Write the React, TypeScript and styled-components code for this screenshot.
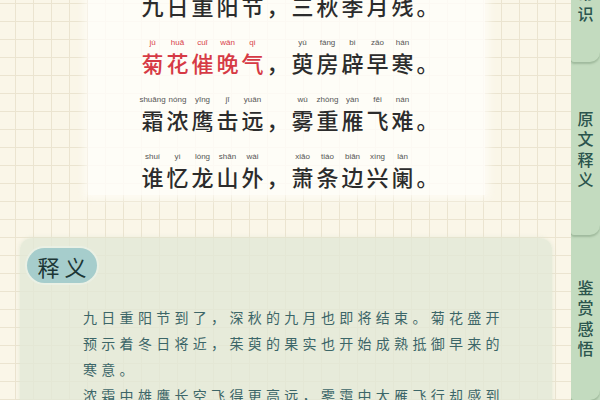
import React from 'react';
import styled, { createGlobalStyle } from 'styled-components';

const GlobalStyle = createGlobalStyle`
  html, body {
    margin: 0;
    padding: 0;
    width: 600px;
    height: 400px;
    overflow: hidden;
  }
  body {
    background-color: #faf6e8;
    background-image:
      linear-gradient(to right, #ebe4d0 1px, transparent 1px),
      linear-gradient(to bottom, #ebe4d0 1px, transparent 1px);
    background-size: 18px 18px;
    background-position: 15px 3px;
    font-family: "Noto Sans CJK SC", "Noto Sans", sans-serif;
  }
`;

const Page = styled.div`
  display: flex;
  width: 600px;
  height: 400px;
  overflow: hidden;
`;

const Main = styled.main`
  flex: 1;
  display: flex;
  flex-direction: column;
  align-items: flex-start;
`;

const PoemCard = styled.section`
  margin: -20px 0 0 88px;
  width: 397px;
  box-sizing: border-box;
  padding: 0 0 5px 52px;
  display: flex;
  flex-direction: column;
  gap: 18px;
  background: rgba(255, 254, 250, 0.82);
  box-shadow: 0 0 8px 4px rgba(255, 254, 250, 0.7);
`;

const PoemRow = styled.div`
  display: flex;
`;

const Cell = styled.div`
  width: 25px;
  display: flex;
  flex-direction: column;
  align-items: center;
`;

const Pinyin = styled.span<{ $red?: boolean }>`
  height: 12px;
  line-height: 12px;
  font-family: "Liberation Sans", Arial, sans-serif;
  font-size: 8px;
  white-space: nowrap;
  color: ${(p) => (p.$red ? '#d8424b' : '#555')};
`;

const Hanzi = styled.span<{ $red?: boolean }>`
  font-size: 22px;
  line-height: 27px;
  font-weight: 500;
  color: ${(p) => (p.$red ? '#d63a45' : '#2c2c2c')};
`;

const NoteCard = styled.section`
  margin: 43px 0 0 20px;
  width: 532px;
  box-sizing: border-box;
  padding: 10px 7px 0;
  border-radius: 12px;
  background: rgba(226, 232, 214, 0.78);
  box-shadow: 0 0 4px rgba(220, 228, 208, 0.8);
  min-height: 200px;
`;

const Pill = styled.div`
  width: 70px;
  height: 35px;
  border-radius: 18px;
  background: #a6cdcc;
  box-shadow: 0 0 0 2px rgba(235, 242, 232, 0.7);
  color: #1c3636;
  font-size: 22px;
  letter-spacing: 5px;
  display: flex;
  align-items: center;
  justify-content: center;
  padding-left: 5px;
  box-sizing: border-box;
`;

const Paragraph = styled.p<{ $first?: boolean }>`
  margin: ${(p) => (p.$first ? '21px' : '0')} 0 0 56px;
  width: 428px;
  font-size: 14px;
  letter-spacing: 4.3px;
  line-height: 26px;
  color: #3c6668;
`;

const TabStrip = styled.nav`
  width: 29px;
  height: 400px;
  overflow: hidden;
  display: flex;
  flex-direction: column;
  background: #c3dbbf;
  box-shadow: inset 1px 0 1px rgba(90, 120, 90, 0.15);
`;

const Tab = styled.div<{ $height: number; $z: number; $bottom?: number }>`
  position: relative;
  z-index: ${(p) => p.$z};
  flex: 0 0 ${(p) => p.$height}px;
  min-height: 0;
  display: flex;
  flex-direction: column;
  align-items: center;
  justify-content: ${(p) => (p.$bottom !== undefined ? 'flex-end' : 'center')};
  padding-bottom: ${(p) => p.$bottom ?? 0}px;
  box-sizing: border-box;
  background: #c3dbbf;
  border-bottom-right-radius: 10px;
  border-bottom-left-radius: 3px;
  box-shadow: 0 2px 2px rgba(70, 100, 70, 0.28);
`;

const TabChar = styled.span`
  font-size: 16px;
  line-height: 20.5px;
  height: 20.5px;
  flex-shrink: 0;
  font-weight: 500;
  color: #2a544d;
`;

type Syl = [string, string];

const poem: { red?: boolean; chars: Syl[] }[] = [
  {
    chars: [
      ['九', 'jiǔ'], ['日', 'rì'], ['重', 'chóng'], ['阳', 'yáng'], ['节', 'jié'], ['，', ''],
      ['三', 'sān'], ['秋', 'qiū'], ['季', 'jì'], ['月', 'yuè'], ['残', 'cán'], ['。', ''],
    ],
  },
  {
    red: true,
    chars: [
      ['菊', 'jú'], ['花', 'huā'], ['催', 'cuī'], ['晚', 'wǎn'], ['气', 'qì'], ['，', ''],
      ['萸', 'yú'], ['房', 'fáng'], ['辟', 'bì'], ['早', 'zǎo'], ['寒', 'hán'], ['。', ''],
    ],
  },
  {
    chars: [
      ['霜', 'shuāng'], ['浓', 'nóng'], ['鹰', 'yīng'], ['击', 'jī'], ['远', 'yuǎn'], ['，', ''],
      ['雾', 'wù'], ['重', 'zhòng'], ['雁', 'yàn'], ['飞', 'fēi'], ['难', 'nán'], ['。', ''],
    ],
  },
  {
    chars: [
      ['谁', 'shuí'], ['忆', 'yì'], ['龙', 'lóng'], ['山', 'shān'], ['外', 'wài'], ['，', ''],
      ['萧', 'xiāo'], ['条', 'tiáo'], ['边', 'biān'], ['兴', 'xìng'], ['阑', 'lán'], ['。', ''],
    ],
  },
];

const tabs = [
  { label: '文学常识', height: 62, bottom: 39 },
  { label: '原文释义', height: 173 },
  { label: '鉴赏感悟', height: 165 },
];

const App: React.FC = () => {
  return (
    <>
      <GlobalStyle />
      <Page>
        <Main>
          <PoemCard>
            {poem.map((line, i) => (
              <PoemRow key={i}>
                {line.chars.map(([han, py], j) => {
                  // red line is only the first half
                  const red = line.red && j < 5;
                  return (
                    <Cell key={j}>
                      <Pinyin $red={red}>{py}</Pinyin>
                      <Hanzi $red={red}>{han}</Hanzi>
                    </Cell>
                  );
                })}
              </PoemRow>
            ))}
          </PoemCard>
          <NoteCard>
            <Pill>释义</Pill>
            <Paragraph $first>
              九日重阳节到了，深秋的九月也即将结束。菊花盛开预示着冬日将近，茱萸的果实也开始成熟抵御早来的寒意。
            </Paragraph>
            <Paragraph>
              浓霜中雄鹰长空飞得更高远，雾霭中大雁飞行却感到困难。
            </Paragraph>
          </NoteCard>
        </Main>
        <TabStrip>
          {tabs.map((t, i) => (
            <Tab key={t.label} $height={t.height} $z={tabs.length - i} $bottom={t.bottom}>
              {t.label.split('').map((c, k) => (
                <TabChar key={k}>{c}</TabChar>
              ))}
            </Tab>
          ))}
        </TabStrip>
      </Page>
    </>
  );
};

export default App;
